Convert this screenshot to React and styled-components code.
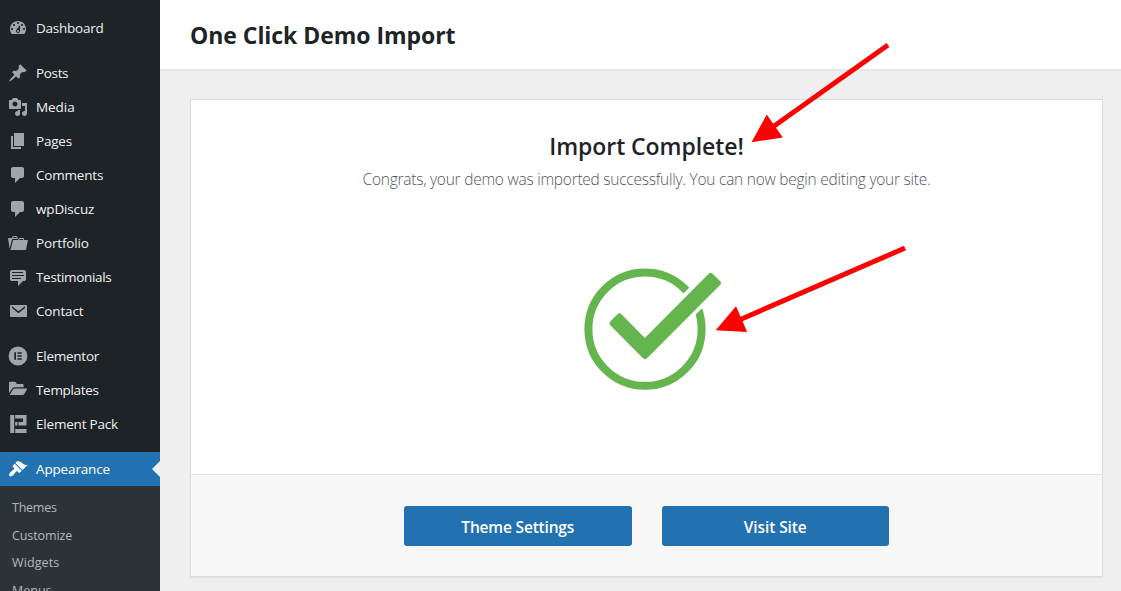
import React from "react";
import styled, { createGlobalStyle } from "styled-components";

const GlobalStyle = createGlobalStyle`
  * { box-sizing: border-box; }
  body {
    margin: 0;
    overflow: hidden;
    background: #efefef;
    font-family: "Open Sans", "Noto Sans", sans-serif;
  }
`;

const Page = styled.div`
  position: relative;
  display: flex;
  width: 1121px;
  height: 591px;
  overflow: hidden;
  background: #efefef;
`;

const Sidebar = styled.nav`
  flex: none;
  width: 160px;
  height: 591px;
  padding-top: 11px;
  overflow: hidden;
  background: #1d2327;
`;

const MenuGroup = styled.div`
  margin-bottom: 10.6px;
`;

const MenuItem = styled.a`
  position: relative;
  display: flex;
  align-items: center;
  gap: 8px;
  height: 34.1px;
  padding-left: 8px;
  color: ${(p) => (p.$active ? "#fff" : "#f0f0f1")};
  background: ${(p) => (p.$active ? "#2271b1" : "transparent")};
  font-size: 13.5px;
  line-height: 18px;
  white-space: nowrap;

  svg {
    flex: none;
    fill: ${(p) => (p.$active ? "#fff" : "#a0a5aa")};
  }
`;

const Label = styled.span`
  letter-spacing: ${(p) => p.$track || 0}px;
`;

const ActiveNotch = styled.span`
  position: absolute;
  right: 0;
  top: 9px;
  border: 8px solid transparent;
  border-left-width: 0;
  border-right-color: #efefef;
`;

const Submenu = styled.div`
  height: 120px;
  padding-top: 8px;
  background: #2c3338;
`;

const SubmenuItem = styled.a`
  display: flex;
  align-items: center;
  height: 27.8px;
  padding-left: 12px;
  color: #b3b7ba;
  font-size: 12.5px;
  line-height: 18px;
`;

const Main = styled.main`
  flex: 1;
  display: flex;
  flex-direction: column;
`;

const Header = styled.header`
  display: flex;
  align-items: center;
  height: 70px;
  padding: 1px 0 0 30px;
  background: #fff;
  border-bottom: 1px solid #e6e6e6;
  box-shadow: 0 1px 1px rgba(0, 0, 0, 0.02);
`;

const Title = styled.h1`
  margin: 0;
  color: #1d2327;
  font-size: 23px;
  font-weight: 700;
  line-height: 32px;
  letter-spacing: ${(p) => p.$track}px;
`;

const Card = styled.section`
  display: flex;
  flex-direction: column;
  width: 913px;
  height: 478px;
  margin: 29px 0 0 30px;
  background: #fff;
  border: 1px solid #dcdcdc;
  box-shadow: 0 1px 1px rgba(0, 0, 0, 0.05);
`;

const CardBody = styled.div`
  flex: 1;
  display: flex;
  flex-direction: column;
  align-items: center;
  padding-top: 30px;
`;

const Heading = styled.h2`
  margin: 0;
  color: #1d2327;
  font-size: 23px;
  font-weight: 600;
  line-height: 32px;
  letter-spacing: ${(p) => p.$track}px;
`;

const Message = styled.p`
  margin: 5px 0 0;
  color: #50575e;
  font-size: 15.5px;
  font-weight: 300;
  line-height: 24px;
  letter-spacing: ${(p) => p.$track}px;
  white-space: nowrap;
`;

const SuccessMark = styled.svg`
  display: block;
  width: 140px;
  height: 124px;
  margin: 76px 0 0 13px;
`;

const CardFooter = styled.footer`
  display: flex;
  justify-content: center;
  gap: 30px;
  height: 102px;
  padding-top: 31px;
  background: #f7f7f7;
  border-top: 1px solid #e6e6e6;
`;

const Button = styled.button`
  width: 227.5px;
  height: 40px;
  padding: 2px 0 0;
  border: 0;
  border-radius: 3px;
  background: #2271b1;
  color: #fff;
  font-family: inherit;
  font-size: 15.5px;
  font-weight: 600;
  letter-spacing: ${(p) => p.$track}px;
`;

const Annotations = styled.svg`
  position: absolute;
  inset: 0;
  pointer-events: none;
`;

const icons = {
  dashboard: "M3.76 16h12.48c1.1-1.37 1.76-3.11 1.76-5 0-4.42-3.58-8-8-8s-8 3.58-8 8c0 1.89.66 3.63 1.76 5zM10 4c.55 0 1 .45 1 1s-.45 1-1 1-1-.45-1-1 .45-1 1-1zM6 6c.55 0 1 .45 1 1s-.45 1-1 1-1-.45-1-1 .45-1 1-1zm8 0c.55 0 1 .45 1 1s-.45 1-1 1-1-.45-1-1 .45-1 1-1zm-5.37 5.55L12 7v6c0 1.1-.9 2-2 2s-2-.9-2-2c0-.57.24-1.08.63-1.45zM4 10c.55 0 1 .45 1 1s-.45 1-1 1-1-.45-1-1 .45-1 1-1zm12 0c.55 0 1 .45 1 1s-.45 1-1 1-1-.45-1-1 .45-1 1-1zm-5 3c0-.55-.45-1-1-1s-1 .45-1 1 .45 1 1 1 1-.45 1-1z",
  pin: "M10.44 3.02l1.82-1.82 6.36 6.35-1.83 1.82c-1.05-.68-2.48-.57-3.41.36l-.75.75c-.92.93-1.04 2.35-.35 3.41l-1.83 1.82-2.41-2.41-2.8 2.79c-.42.42-3.38 2.71-3.8 2.29s1.86-3.39 2.28-3.81l2.79-2.79L4.1 9.36l1.83-1.82c1.05.69 2.48.57 3.4-.36l.75-.75c.93-.92 1.05-2.35.36-3.41z",
  media: "M13 11V4c0-.55-.45-1-1-1h-1.67L9 1H5L3.67 3H2c-.55 0-1 .45-1 1v7c0 .55.45 1 1 1h10c.55 0 1-.45 1-1zM7 4.5c1.38 0 2.5 1.12 2.5 2.5S8.38 9.5 7 9.5 4.5 8.38 4.5 7 5.62 4.5 7 4.5zM14 6h5v10.5c0 1.38-1.12 2.5-2.5 2.5S14 17.88 14 16.5s1.12-2.5 2.5-2.5c.17 0 .34.02.5.05V9h-3V6zm-4 8.05V13h2v3.5c0 1.38-1.12 2.5-2.5 2.5S7 17.88 7 16.5 8.12 14 9.5 14c.17 0 .34.02.5.05z",
  pages: "M6 15V2h10v13H6zm-1 1h8v2H3V5h2v11z",
  comment: "M5 2h9c1.1 0 2 .9 2 2v7c0 1.1-.9 2-2 2h-2l-5 5v-5H5c-1.1 0-2-.9-2-2V4c0-1.1.9-2 2-2z",
  portfolio: "M4 5H.78c-.37 0-.74.32-.69.84l1.56 9.99S3.5 8.47 3.86 6.7c.11-.53.61-.7.98-.7H10s-.7-2.08-.77-2.31C9.11 3.25 8.89 3 8.45 3H5.14c-.36 0-.7.23-.8.64C4.25 4.04 4 5 4 5zm4.88 0h-4s.42-1 .87-1h2.13c.48 0 1 1 1 1zM2.67 16.25c-.31.47-.76.75-1.26.75h15.73c.54 0 .92-.31 1.03-.83.44-2.19 1.68-8.44 1.68-8.44.07-.5-.3-.73-.62-.73H16V5.53c0-.16-.26-.53-.66-.53h-3.76c-.52 0-.87.58-.87.58L10 7H5.59c-.32 0-.63.19-.69.5 0 0-1.59 6.7-1.72 7.33-.07.37-.22.99-.51 1.42zM15.38 7H11s.58-1 1.13-1h2.29c.71 0 .96 1 .96 1z",
  testimonial: "M4 3h12c.55 0 1.02.2 1.41.59S18 4.45 18 5v7c0 .55-.2 1.02-.59 1.41S16.55 14 16 14h-1l-5 5v-5H4c-.55 0-1.02-.2-1.41-.59S2 12.55 2 12V5c0-.55.2-1.02.59-1.41S3.45 3 4 3zm11 2H4v1h11V5zm1 3H4v1h12V8zm-3 3H4v1h9v-1z",
  mail: "M2.7 4h15.6c.4 0 .7.3.7.7v10.6c0 .4-.3.7-.7.7H2.7c-.4 0-.7-.3-.7-.7V4.7c0-.4.3-.7.7-.7zM4 5.2v1.7l6.5 5.4L17 6.9V5.2l-6.5 5.1z",
  elementor: "M10 .6a9.4 9.4 0 1 0 0 18.800a9.400 9.400 0 0 0 0-18.800zM6.300 6.200h1.700v7.600H6.300zM9.500 6.200h4.200v1.500H9.500zM9.500 9.250h4.200v1.500H9.500zM9.500 12.300h4.200v1.500H9.500z",
  folder: "M1 3.200C1 2.300 1.600 1.800 2.400 1.800h4.200c.8 0 1.300.4 1.600 1.100l.6 1.200h5.400c.9 0 1.400.5 1.400 1.300v1.900H6.900c-1.300 0-2.200.5-2.800 1.500L1 13.300zM6.900 8.500h11.300c.7 0 1 .5.700 1.100l-2.500 4.200c-.5.900-1.100 1.200-2 1.200H1.700l3.200-5.400c.4-.8 1-1.100 2-1.100z",
  pack: "M2.200 1h4v18h-4zM7.200 1h11.300v10.500h-8v-3.500h4.500V4.500H7.200zM7.200 8h2.300v3.500H7.200zM7.200 15h11.300v4H7.200z",
  brush: "M14.48 11.06L7.41 3.99l1.5-1.5c.5-.56 2.3-.47 3.51.32 1.21.8 1.43 1.28 2.91 2.1 1.18.64 2.45 1.26 4.45.85zm-.71.71L6.7 4.7 4.93 6.47c-.39.39-.39 1.02 0 1.41l1.06 1.06c.39.39.39 1.03 0 1.42-.6.6-1.43 1.11-2.21 1.69-.35.26-.7.53-1.01.84C1.43 14.23.4 16.08 1.4 17.07c.99 1 2.84-.03 4.18-1.36.31-.31.58-.66.85-1.02.57-.78 1.08-1.61 1.69-2.21.39-.39 1.02-.39 1.41 0l1.06 1.06c.39.39 1.02.39 1.41 0z",
};

const groups = [
  [["Dashboard", "dashboard", -0.25]],
  [
    ["Posts", "pin", -0.35],
    ["Media", "media", -0.05],
    ["Pages", "pages", -0.2],
    ["Comments", "comment", -0.2],
    ["wpDiscuz", "comment", -0.15],
    ["Portfolio", "portfolio", -0.15],
    ["Testimonials", "testimonial", -0.32],
    ["Contact", "mail", -0.15],
  ],
  [
    ["Elementor", "elementor", -0.25],
    ["Templates", "folder", -0.32],
    ["Element Pack", "pack", -0.2],
  ],
];

const submenu = [
  ["Themes", -0.25],
  ["Customize", -0.1],
  ["Widgets", 0.1],
  ["Menus", 0],
];

function Icon({ name }) {
  return (
    <svg width="20" height="20" viewBox="0 0 20 20" fillRule="evenodd">
      <path d={icons[name]} />
    </svg>
  );
}

export default function App() {
  return (
    <Page>
      <GlobalStyle />
      <Sidebar>
        {groups.map((items) => (
          <MenuGroup key={items[0][0]}>
            {items.map(([label, icon, track]) => (
              <MenuItem key={label}>
                <Icon name={icon} />
                <Label $track={track}>{label}</Label>
              </MenuItem>
            ))}
          </MenuGroup>
        ))}
        <MenuItem $active>
          <Icon name="brush" />
          <Label $track={-0.15}>Appearance</Label>
          <ActiveNotch />
        </MenuItem>
        <Submenu>
          {submenu.map(([label, track]) => (
            <SubmenuItem key={label}>
              <Label $track={track}>{label}</Label>
            </SubmenuItem>
          ))}
        </Submenu>
      </Sidebar>
      <Main>
        <Header>
          <Title $track={-0.05}>One Click Demo Import</Title>
        </Header>
        <Card>
          <CardBody>
            <Heading $track={-0.07}>Import Complete!</Heading>
            <Message $track={-0.25}>
              Congrats, your demo was imported successfully. You can now begin editing your site.
            </Message>
            <SuccessMark viewBox="583 267 140 124">
              <circle cx="645" cy="329.2" r="56.600" fill="none" stroke="#65b54e" strokeWidth="8" />
              <path d="M644.800 338 710.700 272.300 721.300 282.800 645 359.200 609 323 619.500 312.600z" fill="#fff" stroke="#fff" strokeWidth="8.600" />
              <path
                d="M644.800 338 708.700 273.800Q710.700 271.800 712.700 273.800L720 281Q722 283 720 285L647 358.200Q645 360.200 643 358.200L610.500 325.400Q608.500 323.300 610.500 321.300L617.500 314.300Q619.500 312.300 621.500 314.300z"
                fill="#65b54e"
              />
            </SuccessMark>
          </CardBody>
          <CardFooter>
            <Button $track={-0.18}>Theme Settings</Button>
            <Button $track={-0.1}>Visit Site</Button>
          </CardFooter>
        </Card>
      </Main>
      <Annotations width="1121" height="591" viewBox="0 0 1121 591">
        <g stroke="#f00" strokeWidth="5">
          <path d="M888 45 772 127.500" />
          <path d="M905 248 738 320.500" />
        </g>
        <g fill="#f00">
          <path d="M751.500 142.200 766.700 114.600 782.800 137.600z" />
          <path d="M715.700 330.300 736 306.300 747.200 332z" />
        </g>
      </Annotations>
    </Page>
  );
}
